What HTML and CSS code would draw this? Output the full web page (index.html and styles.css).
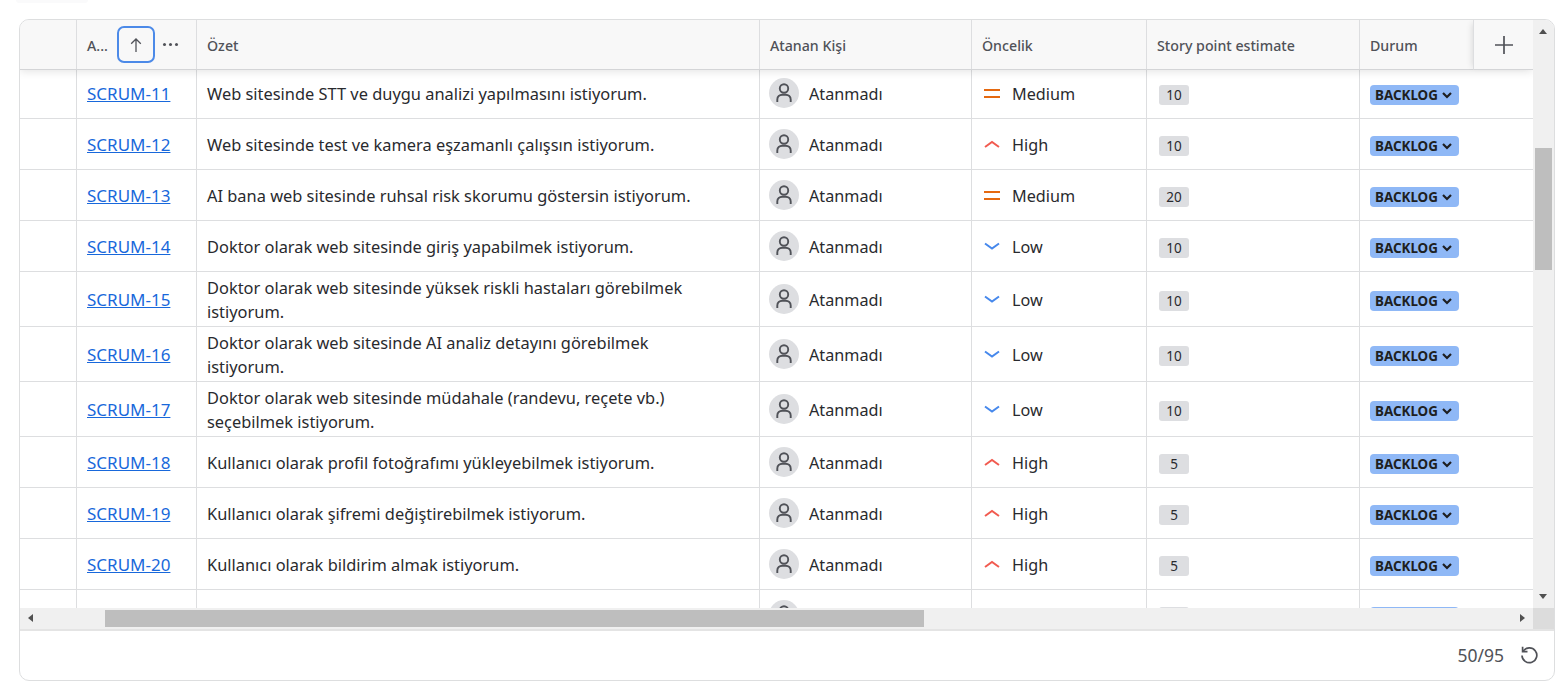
FILE: index.html
```html
<!DOCTYPE html>
<html lang="en">
<head>
    <meta charset="UTF-8">
    <meta name="viewport" content="width=device-width, initial-scale=1.0">
    <title>Backlog</title>
    <link rel="stylesheet" href="styles.css">
</head>
<body>
    <svg class="defs" width="0" height="0" aria-hidden="true">
        <symbol id="person" viewBox="0 0 30 30">
            <circle cx="15" cy="10.5" r="4.2" fill="none" stroke="currentColor" stroke-width="1.9"/>
            <path d="M8.3 24v-2.5c0-3 2.2-4.8 5-4.8h3.4c2.8 0 5 1.8 5 4.8V24" fill="none" stroke="currentColor" stroke-width="1.9"/>
        </symbol>
        <symbol id="medium" viewBox="0 0 16 16">
            <path d="M0 5h16M0 12h16" fill="none" stroke="#e56910" stroke-width="2"/>
        </symbol>
        <symbol id="high" viewBox="0 0 16 16">
            <path d="M1 11l7-5 7 5" fill="none" stroke="#f15b50" stroke-width="2"/>
        </symbol>
        <symbol id="low" viewBox="0 0 16 16">
            <path d="M1 5.5l7 5 7-5" fill="none" stroke="#4688ec" stroke-width="2"/>
        </symbol>
        <symbol id="chev" viewBox="0 0 10 10">
            <path d="M1 3l4 4 4-4" fill="none" stroke="currentColor" stroke-width="2.2"/>
        </symbol>
    </svg>

    <div class="peek"></div>

    <div class="card">
        <div class="table-area">
            <div class="table">
                <div class="row head">
                    <div class="cell"></div>
                    <div class="cell key-head">
                        <span>A...</span>
                        <span class="sort-btn">
                            <svg width="14" height="16" viewBox="0 0 14 16"><path d="M7 15V2M2.2 6.8L7 2l4.8 4.8" fill="none" stroke="currentColor" stroke-width="1.3"/></svg>
                        </span>
                        <span class="dots"><i></i><i></i><i></i></span>
                    </div>
                    <div class="cell">Özet</div>
                    <div class="cell">Atanan Kişi</div>
                    <div class="cell">Öncelik</div>
                    <div class="cell">Story point estimate</div>
                    <div class="cell">Durum</div>
                </div>

                <div class="row">
                    <div class="cell"></div>
                    <div class="cell"><a href="#">SCRUM-11</a></div>
                    <div class="cell summary">Web sitesinde STT ve duygu analizi yapılmasını istiyorum.</div>
                    <div class="cell"><span class="avatar"><svg width="30" height="30"><use href="#person"/></svg></span>Atanmadı</div>
                    <div class="cell"><svg class="prio" width="16" height="16"><use href="#medium"/></svg>Medium</div>
                    <div class="cell"><span class="points">10</span></div>
                    <div class="cell"><span class="status">BACKLOG<svg width="10" height="10"><use href="#chev"/></svg></span></div>
                </div>
                <div class="row">
                    <div class="cell"></div>
                    <div class="cell"><a href="#">SCRUM-12</a></div>
                    <div class="cell summary">Web sitesinde test ve kamera eşzamanlı çalışsın istiyorum.</div>
                    <div class="cell"><span class="avatar"><svg width="30" height="30"><use href="#person"/></svg></span>Atanmadı</div>
                    <div class="cell"><svg class="prio" width="16" height="16"><use href="#high"/></svg>High</div>
                    <div class="cell"><span class="points">10</span></div>
                    <div class="cell"><span class="status">BACKLOG<svg width="10" height="10"><use href="#chev"/></svg></span></div>
                </div>
                <div class="row">
                    <div class="cell"></div>
                    <div class="cell"><a href="#">SCRUM-13</a></div>
                    <div class="cell summary">AI bana web sitesinde ruhsal risk skorumu göstersin istiyorum.</div>
                    <div class="cell"><span class="avatar"><svg width="30" height="30"><use href="#person"/></svg></span>Atanmadı</div>
                    <div class="cell"><svg class="prio" width="16" height="16"><use href="#medium"/></svg>Medium</div>
                    <div class="cell"><span class="points">20</span></div>
                    <div class="cell"><span class="status">BACKLOG<svg width="10" height="10"><use href="#chev"/></svg></span></div>
                </div>
                <div class="row">
                    <div class="cell"></div>
                    <div class="cell"><a href="#">SCRUM-14</a></div>
                    <div class="cell summary">Doktor olarak web sitesinde giriş yapabilmek istiyorum.</div>
                    <div class="cell"><span class="avatar"><svg width="30" height="30"><use href="#person"/></svg></span>Atanmadı</div>
                    <div class="cell"><svg class="prio" width="16" height="16"><use href="#low"/></svg>Low</div>
                    <div class="cell"><span class="points">10</span></div>
                    <div class="cell"><span class="status">BACKLOG<svg width="10" height="10"><use href="#chev"/></svg></span></div>
                </div>
                <div class="row">
                    <div class="cell"></div>
                    <div class="cell"><a href="#">SCRUM-15</a></div>
                    <div class="cell summary">Doktor olarak web sitesinde yüksek riskli hastaları görebilmek<br>istiyorum.</div>
                    <div class="cell"><span class="avatar"><svg width="30" height="30"><use href="#person"/></svg></span>Atanmadı</div>
                    <div class="cell"><svg class="prio" width="16" height="16"><use href="#low"/></svg>Low</div>
                    <div class="cell"><span class="points">10</span></div>
                    <div class="cell"><span class="status">BACKLOG<svg width="10" height="10"><use href="#chev"/></svg></span></div>
                </div>
                <div class="row">
                    <div class="cell"></div>
                    <div class="cell"><a href="#">SCRUM-16</a></div>
                    <div class="cell summary">Doktor olarak web sitesinde AI analiz detayını görebilmek<br>istiyorum.</div>
                    <div class="cell"><span class="avatar"><svg width="30" height="30"><use href="#person"/></svg></span>Atanmadı</div>
                    <div class="cell"><svg class="prio" width="16" height="16"><use href="#low"/></svg>Low</div>
                    <div class="cell"><span class="points">10</span></div>
                    <div class="cell"><span class="status">BACKLOG<svg width="10" height="10"><use href="#chev"/></svg></span></div>
                </div>
                <div class="row">
                    <div class="cell"></div>
                    <div class="cell"><a href="#">SCRUM-17</a></div>
                    <div class="cell summary">Doktor olarak web sitesinde müdahale (randevu, reçete vb.)<br>seçebilmek istiyorum.</div>
                    <div class="cell"><span class="avatar"><svg width="30" height="30"><use href="#person"/></svg></span>Atanmadı</div>
                    <div class="cell"><svg class="prio" width="16" height="16"><use href="#low"/></svg>Low</div>
                    <div class="cell"><span class="points">10</span></div>
                    <div class="cell"><span class="status">BACKLOG<svg width="10" height="10"><use href="#chev"/></svg></span></div>
                </div>
                <div class="row">
                    <div class="cell"></div>
                    <div class="cell"><a href="#">SCRUM-18</a></div>
                    <div class="cell summary">Kullanıcı olarak profil fotoğrafımı yükleyebilmek istiyorum.</div>
                    <div class="cell"><span class="avatar"><svg width="30" height="30"><use href="#person"/></svg></span>Atanmadı</div>
                    <div class="cell"><svg class="prio" width="16" height="16"><use href="#high"/></svg>High</div>
                    <div class="cell"><span class="points">5</span></div>
                    <div class="cell"><span class="status">BACKLOG<svg width="10" height="10"><use href="#chev"/></svg></span></div>
                </div>
                <div class="row">
                    <div class="cell"></div>
                    <div class="cell"><a href="#">SCRUM-19</a></div>
                    <div class="cell summary">Kullanıcı olarak şifremi değiştirebilmek istiyorum.</div>
                    <div class="cell"><span class="avatar"><svg width="30" height="30"><use href="#person"/></svg></span>Atanmadı</div>
                    <div class="cell"><svg class="prio" width="16" height="16"><use href="#high"/></svg>High</div>
                    <div class="cell"><span class="points">5</span></div>
                    <div class="cell"><span class="status">BACKLOG<svg width="10" height="10"><use href="#chev"/></svg></span></div>
                </div>
                <div class="row">
                    <div class="cell"></div>
                    <div class="cell"><a href="#">SCRUM-20</a></div>
                    <div class="cell summary">Kullanıcı olarak bildirim almak istiyorum.</div>
                    <div class="cell"><span class="avatar"><svg width="30" height="30"><use href="#person"/></svg></span>Atanmadı</div>
                    <div class="cell"><svg class="prio" width="16" height="16"><use href="#high"/></svg>High</div>
                    <div class="cell"><span class="points">5</span></div>
                    <div class="cell"><span class="status">BACKLOG<svg width="10" height="10"><use href="#chev"/></svg></span></div>
                </div>
                <!-- next row, only its top shows above the scrollbar -->
                <div class="row">
                    <div class="cell"></div>
                    <div class="cell"></div>
                    <div class="cell"></div>
                    <div class="cell"><span class="avatar"><svg width="30" height="30"><use href="#person"/></svg></span></div>
                    <div class="cell"></div>
                    <div class="cell"><span class="points"></span></div>
                    <div class="cell"><span class="status"></span></div>
                </div>
            </div>

            <div class="add-col">
                <svg width="20" height="20" viewBox="0 0 20 20"><path d="M10 1v18M1 10h18" fill="none" stroke="currentColor" stroke-width="1.7"/></svg>
            </div>
        </div>

        <div class="vbar">
            <span class="arrow up"></span>
            <span class="vthumb"></span>
            <span class="arrow down"></span>
        </div>

        <div class="hbar">
            <span class="arrow left"></span>
            <span class="hthumb"></span>
            <span class="arrow right"></span>
        </div>
        <div class="corner"></div>

        <div class="foot">
            <span>50/95</span>
            <svg width="20" height="20" viewBox="0 0 20 20"><path d="M4.2 6.2A7.4 7.4 0 1 1 3 10.4" fill="none" stroke="currentColor" stroke-width="1.7"/><path d="M3.6 1.8v4.9h4.9" fill="none" stroke="currentColor" stroke-width="1.7"/></svg>
        </div>
    </div>
</body>
</html>
```

FILE: styles.css
```css
* {
    box-sizing: border-box;
}
body {
    margin: 0;
    height: 682px;
    padding: 19px 3px 1px 19px;
    background: #fff;
    color: #292a2e;
    font-family: "Noto Sans", "Open Sans", sans-serif;
    font-size: 16.2px;
    line-height: 24px;
    overflow: hidden;
    position: relative;
}
.defs {
    position: absolute;
}
.peek {
    position: absolute;
    top: 0;
    left: 16px;
    width: 72px;
    height: 3px;
    background: #fafafb;
    border-radius: 0 0 6px 6px;
}
.card {
    height: 662px;
    border: 1px solid #dddedf;
    border-radius: 10px;
    overflow: hidden;
    display: grid;
    grid-template-columns: 1fr 21px;
    grid-template-rows: 588px 21px 1fr;
}
.table-area {
    position: relative;
    overflow: hidden;
}
.row {
    display: grid;
    grid-template-columns: 57px 120px 563px 212px 175px 213px 1fr;
    border-bottom: 1px solid #dddee0;
    min-height: 51px;
}
.cell {
    display: flex;
    align-items: center;
    padding: 4px 10px 2px;
    border-right: 1px solid #dddee0;
}
.cell:last-child {
    border-right: none;
}
.summary {
    font-size: 16.4px;
}
.head {
    min-height: 50px;
    margin-bottom: -2px;
    position: relative;
    background: #f8f8f8;
    color: #505258;
    font-size: 14.2px;
    font-weight: 500;
    border-bottom: 1px solid #d4d5d7;
    box-shadow: 0 2px 8px rgba(0, 0, 0, 0.1);
}
.key-head {
    padding-right: 0;
}
.sort-btn {
    width: 38px;
    height: 37px;
    margin: -2px 0 0 9px;
    border: 2px solid #4c8ae8;
    border-radius: 7px;
    display: flex;
    align-items: center;
    justify-content: center;
    color: #505258;
}
.dots {
    display: flex;
    gap: 3px;
    margin: -2px 0 0 8px;
}
.dots i {
    width: 3px;
    height: 3px;
    border-radius: 50%;
    background: #505258;
}
a {
    color: #1868db;
    font-size: 17px;
}
.avatar {
    width: 30px;
    height: 30px;
    margin: -2px 10px 0 -1px;
    border-radius: 50%;
    background: #dddee1;
    color: #505258;
    display: flex;
}
.prio {
    margin: -2px 12px 0 2px;
}
.points {
    width: 30px;
    height: 20px;
    margin: 2px 0 0 2px;
    border-radius: 3px;
    background: #dddee1;
    font-size: 13.5px;
    line-height: 21px;
    text-align: center;
}
.status {
    width: 89px;
    height: 20px;
    margin-top: 2px;
    padding-left: 5px;
    border-radius: 4px;
    background: #8fb8f6;
    color: #1e1f21;
    font-size: 13.4px;
    font-weight: 700;
    line-height: 20px;
    display: flex;
    align-items: center;
    gap: 4px;
}
.add-col {
    position: absolute;
    top: 0;
    right: 0;
    width: 60px;
    height: 50px;
    padding-top: 1px;
    display: flex;
    align-items: center;
    justify-content: center;
    background: #f8f8f8;
    border-left: 1px solid #dddee0;
    border-bottom: 1px solid #d4d5d7;
    box-shadow: -4px 0 6px -3px rgba(0, 0, 0, 0.12);
    color: #505258;
}
.vbar {
    grid-row: 1;
    grid-column: 2;
    background: #f0f0f0;
    position: relative;
}
.hbar {
    grid-row: 2;
    grid-column: 1;
    background: #f0f0f0;
    position: relative;
}
.vthumb {
    position: absolute;
    top: 128px;
    left: 2px;
    width: 17px;
    height: 122px;
    background: #bebebe;
}
.hthumb {
    position: absolute;
    top: 2px;
    left: 85px;
    width: 819px;
    height: 17px;
    background: #bebebe;
}
.corner {
    grid-row: 2;
    grid-column: 2;
    background: #dcdcdc;
}
.arrow {
    position: absolute;
    width: 0;
    height: 0;
    border: 4.5px solid transparent;
}
.arrow.up {
    top: 9px;
    left: 6px;
    border-top: none;
    border-bottom: 5px solid #505050;
}
.arrow.down {
    bottom: 9px;
    left: 6px;
    border-bottom: none;
    border-top: 5px solid #505050;
}
.arrow.left {
    top: 6px;
    left: 8px;
    border-left: none;
    border-right: 5px solid #505050;
}
.arrow.right {
    top: 6px;
    right: 8px;
    border-right: none;
    border-left: 5px solid #505050;
}
.foot {
    grid-column: 1 / 3;
    border-top: 2px solid #e4e4e4;
    display: flex;
    align-items: center;
    justify-content: flex-end;
    gap: 15px;
    padding: 0 15px 2px 0;
    color: #505258;
    font-size: 17.5px;
}
```
